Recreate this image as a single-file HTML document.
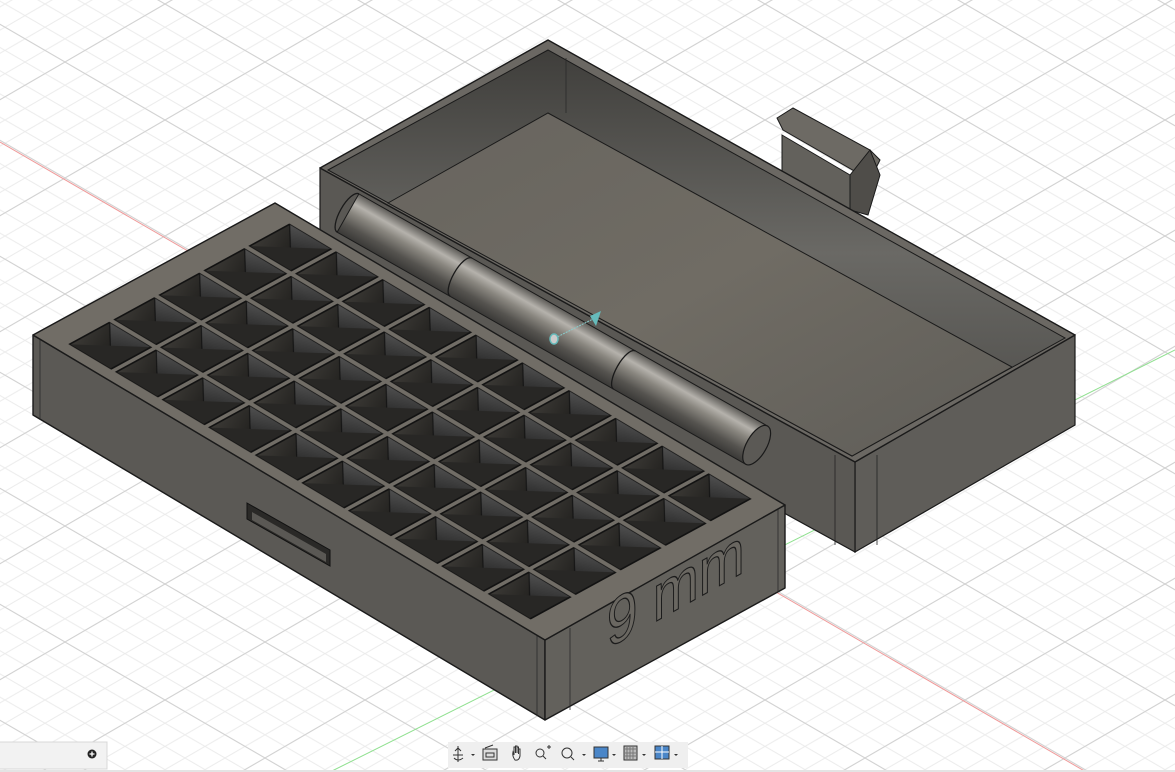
<!DOCTYPE html>
<html><head><meta charset="utf-8"><style>
html,body{margin:0;padding:0;background:#fff;width:1175px;height:772px;overflow:hidden;font-family:"Liberation Sans",sans-serif}
svg{position:absolute;left:0;top:0;overflow:hidden;display:block}
</style></head><body>
<svg width="1175" height="772" viewBox="0 0 1175 772" xmlns="http://www.w3.org/2000/svg">
<defs>
<clipPath id="frame"><rect width="1175" height="772"/></clipPath>
<pattern id="grid" patternUnits="userSpaceOnUse" x="65" y="62" width="40" height="23.2">
<path d="M0 0L40 23.2M40 0L0 23.2" stroke="#ececec" stroke-width="1" fill="none"/>
</pattern>
<pattern id="gridM" patternUnits="userSpaceOnUse" x="65" y="62" width="200" height="116">
<path d="M0 0L200 116M200 0L0 116" stroke="#d2d2d2" stroke-width="1" fill="none"/>
</pattern>
<linearGradient id="cellL" x1="0" y1="0" x2="1" y2="1"><stop offset="0" stop-color="#3c3a36"/><stop offset="1" stop-color="#1d1c1a"/></linearGradient>
<linearGradient id="cellR" x1="1" y1="0" x2="0" y2="1"><stop offset="0" stop-color="#505050"/><stop offset="1" stop-color="#262626"/></linearGradient>
<pattern id="cells" patternUnits="userSpaceOnUse" x="3.5" y="4.5" width="18.6" height="9.1">
<rect x="1" y="0.5" width="16.6" height="8.1" fill="#282725" stroke="#111" stroke-width="0.25"/>
<polygon points="1,0.5 17.6,0.5 9.3,4.55" fill="url(#cellL)"/>
<polygon points="17.6,0.5 17.6,8.6 9.3,4.55" fill="url(#cellR)"/>
<line x1="17.6" y1="0.5" x2="9.3" y2="4.55" stroke="#111" stroke-width="0.2"/>
<rect x="1" y="0.5" width="16.6" height="8.1" fill="none" stroke="#111" stroke-width="0.3"/>
</pattern>
<linearGradient id="hinge" x1="0" y1="0" x2="0" y2="1">
<stop offset="0" stop-color="#5e5c58"/><stop offset="0.25" stop-color="#b5b2ac"/><stop offset="0.45" stop-color="#8a8780"/><stop offset="0.75" stop-color="#55534f"/><stop offset="1" stop-color="#3a3937"/>
</linearGradient>
<linearGradient id="floor" x1="0" y1="0" x2="1" y2="1">
<stop offset="0" stop-color="#67645e"/><stop offset="0.5" stop-color="#706c64"/><stop offset="1" stop-color="#5f5d58"/>
</linearGradient>
<linearGradient id="wallB" x1="0" y1="0" x2="0" y2="1">
<stop offset="0" stop-color="#3f3e3b"/><stop offset="0.5" stop-color="#6a6965"/><stop offset="1" stop-color="#4a4946"/>
</linearGradient>
</defs>
<g clip-path="url(#frame)">
<rect width="1175" height="772" fill="#fff"/>
<rect width="1175" height="772" fill="url(#grid)"/>
<rect width="1175" height="772" fill="url(#gridM)"/>
<line x1="0" y1="142" x2="1100" y2="780" stroke="#f09a9a" stroke-width="1"/>
<line x1="1175" y1="350" x2="330" y2="772" stroke="#8fe08f" stroke-width="1"/>

<polygon points="855,462 1075,335 1075,425 855,552" fill="#5f5d59" stroke="#1a1a1a" stroke-width="1.2"/>
<polygon points="320,168 855,462 855,552 320,258" fill="#5a5854" stroke="#1a1a1a" stroke-width="1.2"/>
<line x1="835" y1="455" x2="835" y2="545" stroke="#222" stroke-width="0.8"/>
<line x1="877" y1="455" x2="877" y2="545" stroke="#222" stroke-width="0.8"/>
<polygon points="783,130 870,180 880,160 870,150 793,108 777,118" fill="#6d6a64" stroke="#1a1a1a" stroke-width="1"/>
<polygon points="782,135 850,175 850,210 782,175" fill="#63615c" stroke="#1a1a1a" stroke-width="1"/>
<polygon points="850,175 870,150 880,175 868,215 850,210" fill="#4f4d49" stroke="#1a1a1a" stroke-width="1"/>
<polygon points="320,168 548,40 1075,335 855,462" fill="#6b6863" stroke="#1a1a1a" stroke-width="1.4" stroke-linejoin="round"/>
<polygon points="328,170 548,50 1065,338 852,456" fill="url(#wallB)" stroke="#1a1a1a" stroke-width="1"/>
<polygon points="388,203 548,113 1012,367 852,456" fill="url(#floor)" stroke="#1a1a1a" stroke-width="1"/>
<line x1="566" y1="58" x2="566" y2="113" stroke="#2a2a2a" stroke-width="0.8"/>

<polygon points="33,335 545,640 545,720 33,415" fill="#5b5955" stroke="#1a1a1a" stroke-width="1.4" stroke-linejoin="round"/>
<polygon points="545,640 785,505 785,588 545,720" fill="#63615c" stroke="#1a1a1a" stroke-width="1.4" stroke-linejoin="round"/>
<line x1="570" y1="628" x2="570" y2="710" stroke="#2a2a2a" stroke-width="0.8"/>
<line x1="537" y1="636" x2="537" y2="716" stroke="#2a2a2a" stroke-width="0.8"/>
<line x1="40" y1="335" x2="40" y2="420" stroke="#2a2a2a" stroke-width="0.8"/>
<line x1="778" y1="508" x2="778" y2="592" stroke="#2a2a2a" stroke-width="0.8"/>
<polygon points="33,335 275,203 785,505 545,640" fill="#716d66" stroke="#1a1a1a" stroke-width="1.4" stroke-linejoin="round"/>
<g transform="matrix(2.42,-1.32,5.12,3.05,33,335)">
<rect x="3.5" y="4.5" width="93" height="91" fill="url(#cells)"/>
</g>
<polygon points="247,503 330,550 330,566 247,519" fill="#2a2927" stroke="#111" stroke-width="1"/>
<polygon points="252,512 326,554 326,562 252,520" fill="#5a5854"/>
<g transform="matrix(0.872,-0.49,0,1,0,0)">
<text x="696" y="990" font-size="66" font-family="Liberation Sans, sans-serif" fill="#6a6761" stroke="#1c1c1c" stroke-width="1.2" textLength="158" lengthAdjust="spacingAndGlyphs">9 mm</text>
</g>

<g transform="translate(348,213) rotate(29.6)">
<rect x="0" y="-22" width="470" height="44" fill="url(#hinge)" stroke="#1a1a1a" stroke-width="1"/>
<path d="M130 -22 A8 22 0 0 0 130 22" fill="none" stroke="#1a1a1a" stroke-width="1.3"/>
<path d="M318 -22 A8 22 0 0 0 318 22" fill="none" stroke="#1a1a1a" stroke-width="1.3"/>
<path d="M0 -22 A8 22 0 0 0 0 22" fill="none" stroke="#1a1a1a" stroke-width="1.3"/>
<ellipse cx="470" cy="0" rx="10" ry="22" fill="#5b5955" stroke="#1a1a1a" stroke-width="1.2"/>
</g>
<line x1="555" y1="338" x2="595" y2="318" stroke="#8cc" stroke-width="1" stroke-dasharray="2,1"/>
<polygon points="590,316 601,311 596,326" fill="#6bb"/>
<ellipse cx="554" cy="339" rx="4" ry="5" fill="#ccc" stroke="#6bb" stroke-width="1.5"/>

<rect x="-1" y="742" width="108" height="27" fill="#f2f2f2" stroke="#d8d8d8"/>
<circle cx="92" cy="754" r="4.5" fill="#222"/>
<path d="M89.5 754h5M92 751.5v5" stroke="#fff" stroke-width="1.3"/>
<rect x="448" y="742" width="240" height="26" fill="#efefef"/>
<rect x="0" y="770" width="1175" height="2" fill="#e4e4e4"/>
<g stroke="#333" fill="none" stroke-width="1">
<path d="M458 746v16M453 755h10M455 751l3-3 3 3M454 758q4 4 9 0"/>
<rect x="483" y="749" width="14" height="11" fill="#ddd"/><rect x="486" y="753" width="8" height="4"/><path d="M485 748l8-3"/>
<path d="M515 760q-3-4-2-8l1 3v-8h1.5v6v-7h1.5v7v-6h1.5v7v-5h1.5v7q-1 5-5 4z"/>
<circle cx="540" cy="753" r="4"/><path d="M543 756l3 3M547 747h4M549 745v4"/>
<circle cx="567" cy="753" r="5"/><path d="M571 757l3 3"/>
<rect x="594" y="747" width="14" height="11" fill="#4a86c8" stroke="#333"/><path d="M598 761h6M601 758v3"/>
<rect x="624" y="746" width="13" height="14" fill="#bbb"/><path d="M627 746v14M630 746v14M633 746v14M624 749h13M624 753h13M624 756h13" stroke="#777"/>
<rect x="655" y="746" width="14" height="13" fill="#4a86c8"/><path d="M662 746v13M655 752h14" stroke="#fff"/>
</g>
<g fill="#333">
<path d="M471 754l2 2 2-2z"/><path d="M582 754l2 2 2-2z"/><path d="M612 754l2 2 2-2z"/><path d="M642 754l2 2 2-2z"/><path d="M674 754l2 2 2-2z"/>
</g>
</g>
</svg>
</body></html>
